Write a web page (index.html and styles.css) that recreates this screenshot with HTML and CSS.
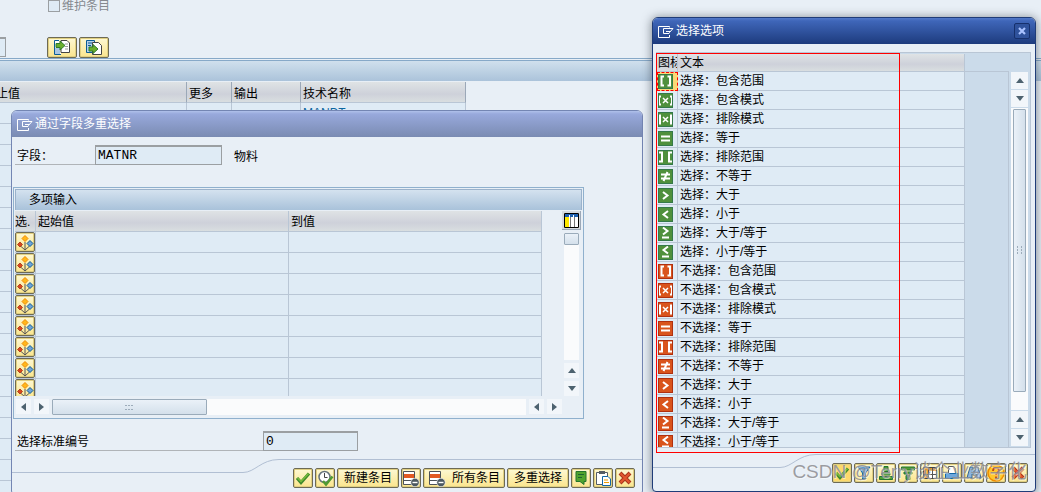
FILE: index.html
```html
<!DOCTYPE html>
<html lang="zh-CN">
<head>
<meta charset="utf-8">
<title>选择选项</title>
<link rel="stylesheet" href="styles.css">
</head>
<body>
<svg class="defs" aria-hidden="true">
  <symbol id="in" viewBox="0 0 15 15"><path d="M6 2.5H3.500v9H6M9.500 2.500H12v9H9.500"/></symbol>
  <symbol id="inx" viewBox="0 0 15 15"><path d="M3 3.500H1v8h2M12 3.500h2v8h-2"/><path class="thin" d="M5 5l5 5M10 5l-5 5"/></symbol>
  <symbol id="outx" viewBox="0 0 15 15"><path d="M0 3.500h2v8H0M15 3.500h-2v8h2"/><path class="thin" d="M5 5l5 5M10 5l-5 5"/></symbol>
  <symbol id="eq" viewBox="0 0 15 15"><path d="M3 5.500h9M3 9.500h9"/></symbol>
  <symbol id="out" viewBox="0 0 15 15"><path d="M1 2.500h3v9H1M14 2.500h-3v9h3"/></symbol>
  <symbol id="ne" viewBox="0 0 15 15"><path d="M3 5.500h9M3 9.500h9M9.500 3l-4 9"/></symbol>
  <symbol id="gt" viewBox="0 0 15 15"><path d="M5 4l4.500 3.500L5 11"/></symbol>
  <symbol id="lt" viewBox="0 0 15 15"><path d="M10 4L5.500 7.500 10 11"/></symbol>
  <symbol id="ge" viewBox="0 0 15 15"><path d="M5 1.500L9.500 5 5 8.500M4 11.500h7"/></symbol>
  <symbol id="le" viewBox="0 0 15 15"><path d="M10 1.500L5.500 5 10 8.500M4 11.500h7"/></symbol>
  <symbol id="pick" viewBox="0 0 18 17"><path d="M9 8v8L4.500 12M9 16l4.500-4" fill="none" stroke="#555" stroke-width="1"/><path d="M9 1.500L12 4.500 9 7.500 6 4.500z" fill="#ffb71b" stroke="#f08a00"/><path d="M4 8l2.500 2.500L4 13 1.500 10.500z" fill="#d8481c" stroke="#a82c10" stroke-width=".8"/><path d="M14 6.500l3 3-3 3-3-3z" fill="#6fa3d8" stroke="#0b5a94"/></symbol>
  <symbol id="check" viewBox="0 0 16 16"><path d="M2 8l4 4.500 8-9" fill="none" stroke="#3f8a2c" stroke-width="3.200"/><path d="M2.500 8L6 11.500l7.500-8" fill="none" stroke="#79bd3c" stroke-width="1.400"/></symbol>
  <symbol id="cross" viewBox="0 0 16 16"><path d="M3 3l10 10M13 3L3 13" stroke="#a9331c" stroke-width="4"/><path d="M3.500 3.500l9 9M12.500 3.500l-9 9" stroke="#e2582e" stroke-width="2"/></symbol>
  <symbol id="exit" viewBox="0 0 16 13"><path d="M11.500 2.500v-1h-11v11h11V10M5.500 3.500H15L11.500 7.500M5.500 3.500v5h5.500l.5-1M8 6.500h4" fill="none" stroke="#fff"/></symbol>
  <symbol id="delrow" viewBox="0 0 18 17"><path d="M1.500 1.500h11v13h-11zM1.500 10.500h11" fill="#fff" stroke="#4d5258"/><path d="M2 4h10v4H2z" fill="#e25a22"/><circle cx="13" cy="12.500" r="4.200" fill="#4d5960" stroke="#fff" stroke-width=".6"/><path d="M10.500 12.500h5" stroke="#fff" stroke-width="1.400"/></symbol>
</svg>

<main class="stage">
  <section class="page">
    <div class="page-tools">
      <label class="upkeep"><input type="checkbox" class="tick" disabled>维护条目</label>
      <div class="tool-row">
        <input class="field stub" type="text" aria-label="值">
        <button class="btn wide" type="button" aria-label="导入">
          <svg width="18" height="17" viewBox="0 0 18 17"><path d="M6 1.500H1.500v14H8" fill="#fff" stroke="#0c5c96"/><path d="M2 9h5v6H2z" fill="#a9c6e4"/><path d="M8 1.500h6l2.500 2.500v9.500H8z" fill="#fff" stroke="#444"/><path d="M12 5h3M12 7.500h3M12 10h3" stroke="#999"/><path d="M3 4.500h4V2l5 4.500L7 11V8.500H3z" fill="#6aae2c" stroke="#2e7b2c"/></svg>
        </button>
        <button class="btn wide" type="button" aria-label="导出">
          <svg width="18" height="17" viewBox="0 0 18 17"><path d="M1.500 1.500h8v12h-8z" fill="#b5d0ea" stroke="#0c5c96"/><path d="M7.500 3.500h6l3 3v9h-9z" fill="#fff" stroke="#444"/><path d="M3 4h4M3 6.500h3" stroke="#0c5c96"/><path d="M4 8h4V5.500l5 4.500-5 4.500V12H4z" fill="#6aae2c" stroke="#2e7b2c"/></svg>
        </button>
      </div>
    </div>
    <div class="page-bar"></div>
    <table class="grid back">
      <colgroup><col class="b1"><col class="b2"><col class="b3"><col class="b4"></colgroup>
      <thead><tr><th><span class="cut">止值</span></th><th>更多</th><th>输出</th><th>技术名称</th></tr></thead>
      <tbody>
        <tr><td></td><td></td><td></td><td class="tech">MANDT</td></tr>
        <tr><td></td><td></td><td></td><td></td></tr><tr><td></td><td></td><td></td><td></td></tr>
        <tr><td></td><td></td><td></td><td></td></tr><tr><td></td><td></td><td></td><td></td></tr>
        <tr><td></td><td></td><td></td><td></td></tr><tr><td></td><td></td><td></td><td></td></tr>
        <tr><td></td><td></td><td></td><td></td></tr><tr><td></td><td></td><td></td><td></td></tr>
        <tr><td></td><td></td><td></td><td></td></tr><tr><td></td><td></td><td></td><td></td></tr>
        <tr><td></td><td></td><td></td><td></td></tr><tr><td></td><td></td><td></td><td></td></tr>
        <tr><td></td><td></td><td></td><td></td></tr><tr><td></td><td></td><td></td><td></td></tr>
        <tr><td></td><td></td><td></td><td></td></tr><tr><td></td><td></td><td></td><td></td></tr>
        <tr><td></td><td></td><td></td><td></td></tr><tr><td></td><td></td><td></td><td></td></tr>
      </tbody>
    </table>
  </section>

  <section class="dialog multi" aria-label="通过字段多重选择">
    <header class="title muted"><svg width="16" height="13"><use href="#exit"/></svg><span>通过字段多重选择</span></header>
    <div class="form first">
      <label class="caption short" for="fld">字段：</label>
      <input class="field name" id="fld" type="text" value="MATNR">
      <span class="desc">物料</span>
    </div>
    <div class="frame">
      <h2 class="frame-title">多项输入</h2>
      <div class="frame-body">
        <div class="clip">
          <table class="grid entry">
            <colgroup><col class="e1"><col><col></colgroup>
            <thead><tr><th>选.</th><th>起始值</th><th>到值</th></tr></thead>
            <tbody>
              <tr><td><button class="btn pick" type="button" aria-label="选择"><svg width="18" height="17"><use href="#pick"/></svg></button></td><td></td><td></td></tr>
              <tr><td><button class="btn pick" type="button" aria-label="选择"><svg width="18" height="17"><use href="#pick"/></svg></button></td><td></td><td></td></tr>
              <tr><td><button class="btn pick" type="button" aria-label="选择"><svg width="18" height="17"><use href="#pick"/></svg></button></td><td></td><td></td></tr>
              <tr><td><button class="btn pick" type="button" aria-label="选择"><svg width="18" height="17"><use href="#pick"/></svg></button></td><td></td><td></td></tr>
              <tr><td><button class="btn pick" type="button" aria-label="选择"><svg width="18" height="17"><use href="#pick"/></svg></button></td><td></td><td></td></tr>
              <tr><td><button class="btn pick" type="button" aria-label="选择"><svg width="18" height="17"><use href="#pick"/></svg></button></td><td></td><td></td></tr>
              <tr><td><button class="btn pick" type="button" aria-label="选择"><svg width="18" height="17"><use href="#pick"/></svg></button></td><td></td><td></td></tr>
              <tr><td><button class="btn pick" type="button" aria-label="选择"><svg width="18" height="17"><use href="#pick"/></svg></button></td><td></td><td></td></tr>
            </tbody>
          </table>
        </div>
        <div class="side">
          <button class="config" type="button" aria-label="配置"><svg width="15" height="15" viewBox="0 0 15 15"><path d="M0 0h15v15H0z" fill="#fff"/><path d="M1 1h13v3H1z" fill="#1d5fb0"/><path d="M1 4h4v10H1z" fill="#ffe800"/><path d="M6.500 4v10M10.500 4v10" stroke="#777"/><path d="M5.500 2v2M9.500 2v2" stroke="#fff"/><path d="M.5.5h14v14H.5z" fill="none" stroke="#000"/></svg></button>
          <div class="vtrack"><span class="thumb small"></span></div>
          <button class="arrow" type="button" aria-label="上"><i class="tri up"></i></button>
          <button class="arrow" type="button" aria-label="下"><i class="tri down"></i></button>
        </div>
      </div>
      <div class="hbar">
        <button class="arrow" type="button" aria-label="左"><i class="tri left"></i></button>
        <button class="arrow" type="button" aria-label="右"><i class="tri right"></i></button>
        <div class="htrack"><span class="thumb long"><svg width="9" height="5" viewBox="0 0 9 5"><path d="M0 .5h9M0 4.500h9" stroke="#9dacba" stroke-dasharray="2 1" stroke-width="1"/></svg></span></div>
        <button class="arrow" type="button" aria-label="左"><i class="tri left"></i></button>
        <button class="arrow" type="button" aria-label="右"><i class="tri right"></i></button>
      </div>
    </div>
    <div class="form">
      <label class="caption long-caption" for="num">选择标准编号</label>
      <input class="field number" id="num" type="text" value="0">
    </div>
    <footer>
      <div class="ledge"><i class="low"></i><svg width="36" height="14" viewBox="0 0 36 14"><path d="M0 13.500C12 13.500 18 .5 36 .5" fill="none" stroke="#b1bfd3"/></svg><i class="high"></i></div>
      <div class="actions">
        <button class="btn sq" type="button" aria-label="确认"><svg width="16" height="16"><use href="#check"/></svg></button>
        <button class="btn sq" type="button" aria-label="执行"><svg width="17" height="17" viewBox="0 0 17 17"><circle cx="7.500" cy="7" r="5.500" fill="#fff" stroke="#66737c" stroke-width="1.500"/><path d="M7.500 3v4.500h3" fill="none" stroke="#444"/><path d="M6 11l3 3.500 6.500-8" fill="none" stroke="#4f9a32" stroke-width="2.500"/></svg></button>
        <button class="btn text" type="button">新建条目</button>
        <button class="btn sq" type="button" aria-label="删除条目"><svg width="18" height="17"><use href="#delrow"/></svg></button>
        <button class="btn all" type="button"><svg width="18" height="17"><use href="#delrow"/></svg>所有条目</button>
        <button class="btn text" type="button">多重选择</button>
        <button class="btn sq" type="button" aria-label="导入文本"><svg width="16" height="16" viewBox="0 0 16 16"><path d="M3 1.500h10v10h-2v3L7 11.500H3z" fill="#50a32f" stroke="#23752d"/><path d="M5 4.500h6M5 7.500h4" stroke="#1d6530"/></svg></button>
        <button class="btn sq" type="button" aria-label="粘贴"><svg width="17" height="17" viewBox="0 0 17 17"><path d="M1.500 2.500h11v12h-11z" fill="#fff" stroke="#555c64"/><path d="M4 1h6v3H4z" fill="#555c64"/><path d="M7.500 6.500H13l2.500 2.500v6.500h-8z" fill="#fff" stroke="#1267a8"/><path d="M9 10h4M9 12.500h5" stroke="#ef9c00"/></svg></button>
        <button class="btn sq" type="button" aria-label="取消"><svg width="16" height="16"><use href="#cross"/></svg></button>
      </div>
    </footer>
  </section>

  <section class="dialog options" aria-label="选择选项">
    <header class="title"><svg width="16" height="13"><use href="#exit"/></svg><span>选择选项</span>
      <button class="close" type="button" aria-label="关闭"><svg width="8" height="8" viewBox="0 0 8 8"><path d="M1 1l6 6M7 1L1 7" stroke="#a9c2ff" stroke-width="2.200"/></svg></button>
    </header>
    <div class="list">
      <div class="list-clip">
        <table class="grid opts">
          <colgroup><col class="o1"><col></colgroup>
          <thead><tr><th>图标</th><th>文本</th></tr></thead>
          <tbody class="inc">
            <tr class="current"><td><svg class="sign"><use href="#in"/></svg></td><td>选择：包含范围</td></tr>
            <tr><td><svg class="sign"><use href="#inx"/></svg></td><td>选择：包含模式</td></tr>
            <tr><td><svg class="sign"><use href="#outx"/></svg></td><td>选择：排除模式</td></tr>
            <tr><td><svg class="sign"><use href="#eq"/></svg></td><td>选择：等于</td></tr>
            <tr><td><svg class="sign"><use href="#out"/></svg></td><td>选择：排除范围</td></tr>
            <tr><td><svg class="sign"><use href="#ne"/></svg></td><td>选择：不等于</td></tr>
            <tr><td><svg class="sign"><use href="#gt"/></svg></td><td>选择：大于</td></tr>
            <tr><td><svg class="sign"><use href="#lt"/></svg></td><td>选择：小于</td></tr>
            <tr><td><svg class="sign"><use href="#ge"/></svg></td><td>选择：大于/等于</td></tr>
            <tr><td><svg class="sign"><use href="#le"/></svg></td><td>选择：小于/等于</td></tr>
          </tbody>
          <tbody class="exc">
            <tr><td><svg class="sign"><use href="#in"/></svg></td><td>不选择：包含范围</td></tr>
            <tr><td><svg class="sign"><use href="#inx"/></svg></td><td>不选择：包含模式</td></tr>
            <tr><td><svg class="sign"><use href="#outx"/></svg></td><td>不选择：排除模式</td></tr>
            <tr><td><svg class="sign"><use href="#eq"/></svg></td><td>不选择：等于</td></tr>
            <tr><td><svg class="sign"><use href="#out"/></svg></td><td>不选择：排除范围</td></tr>
            <tr><td><svg class="sign"><use href="#ne"/></svg></td><td>不选择：不等于</td></tr>
            <tr><td><svg class="sign"><use href="#gt"/></svg></td><td>不选择：大于</td></tr>
            <tr><td><svg class="sign"><use href="#lt"/></svg></td><td>不选择：小于</td></tr>
            <tr><td><svg class="sign"><use href="#ge"/></svg></td><td>不选择：大于/等于</td></tr>
            <tr><td><svg class="sign"><use href="#le"/></svg></td><td>不选择：小于/等于</td></tr>
          </tbody>
        </table>
      </div>
      <div class="gutter"></div>
      <div class="vbar">
        <button class="arrow" type="button" aria-label="上"><i class="tri up"></i></button>
        <button class="arrow" type="button" aria-label="下"><i class="tri down"></i></button>
        <div class="vtrack"><span class="thumb tall"><svg width="5" height="9" viewBox="0 0 5 9"><path d="M.5 0v9M4.500 0v9" stroke="#9dacba" stroke-dasharray="2 1"/></svg></span></div>
        <button class="arrow" type="button" aria-label="上"><i class="tri up"></i></button>
        <button class="arrow" type="button" aria-label="下"><i class="tri down"></i></button>
      </div>
    </div>
    <footer>
      <div class="ledge"><i class="low"></i><svg width="36" height="14" viewBox="0 0 36 14"><path d="M0 13.500C12 13.500 18 .5 36 .5" fill="none" stroke="#b1bfd3"/></svg><i class="high"></i></div>
      <div class="actions">
        <button class="btn sq focus" type="button" aria-label="确认"><svg width="16" height="16"><use href="#check"/></svg></button>
        <button class="btn sq" type="button" aria-label="过滤"><svg width="16" height="16" viewBox="0 0 16 16"><path d="M2 2h12L9.500 8v6h-3V8z" fill="#6aa2d6" stroke="#1267a8"/></svg></button>
        <button class="btn sq" type="button" aria-label="升序"><svg width="16" height="16" viewBox="0 0 16 16"><path d="M6 1.500h4v5H6zM4 8h8v2H4zM1.500 11.500h13v3h-13z" fill="#4f9f35" stroke="#23752d"/></svg></button>
        <button class="btn sq" type="button" aria-label="降序"><svg width="16" height="16" viewBox="0 0 16 16"><path d="M1.500 2h13v3h-13zM4 7h8v2H4zM6 10.500h4v4H6z" fill="#4f9f35" stroke="#23752d"/></svg></button>
        <button class="btn sq" type="button" aria-label="布局"><svg width="16" height="16" viewBox="0 0 16 16"><path d="M1.500 2.500h13v11h-13z" fill="#fff" stroke="#444"/><path d="M2 3h12v3H2zM2 6h4v7H2z" fill="#f09a2a"/><path d="M6.500 3v10M10.500 3v10M2 9.500h12" stroke="#555"/></svg></button>
        <button class="btn sq" type="button" aria-label="打印"><svg width="16" height="16" viewBox="0 0 16 16"><path d="M4.500 1.500h5l2 2v5h-7z" fill="#fff" stroke="#555"/><path d="M1.500 8.500h13v5h-13z" fill="#6ea7dc" stroke="#1267a8"/></svg></button>
        <button class="btn sq" type="button" aria-label="查找"><svg width="16" height="16" viewBox="0 0 16 16"><path d="M4 2h3v4h2V2h3l3 11h-5V9H6v4H1z" fill="#8eb4dc" stroke="#316696"/></svg></button>
        <button class="btn sq" type="button" aria-label="帮助"><svg width="18" height="18" viewBox="0 0 18 18"><circle cx="9" cy="9" r="8" fill="#ffc72e" stroke="#ef8d00" stroke-width="1.500"/><path d="M6 7c0-4 6-4 6-.5 0 2-3 2-3 4.500M9 12.500v2" fill="none" stroke="#c14a14" stroke-width="1.800"/></svg></button>
        <button class="btn sq" type="button" aria-label="取消"><svg width="16" height="16"><use href="#cross"/></svg></button>
      </div>
    </footer>
    <div class="marker"></div>
  </section>
  <p class="credit">CSDN @Terry谈企业数字化</p>
</main>
</body>
</html>
```
FILE: styles.css
```css
* { box-sizing: border-box; }
body { margin: 0; background: #e8eff6; color: #000; font: 12px/16px "Liberation Sans", "Noto Sans CJK SC", sans-serif; }
button, input { font: inherit; color: inherit; }
.defs { position: absolute; width: 0; height: 0; }
.stage { position: relative; height: 100vh; overflow: hidden; }

/* shared controls */
.btn { display: flex; align-items: center; justify-content: center; flex: none; height: 20px; padding: 0; border: 1px solid #6d6a55; border-radius: 2px; background: linear-gradient(#fdf8d4, #fbe58d); box-shadow: inset 0 0 0 1px #e0cf80; }
.btn svg { flex: none; }
.sq { width: 20px; }
.wide { width: 30px; height: 21px; }
.text { width: 62px; white-space: nowrap; }
.all { width: 82px; gap: 6px; white-space: nowrap; }
.focus { background: #fdd96c; }
.field { height: 20px; padding: 0 2px; border: 1px solid #9b9fa2; border-top-width: 2px; border-radius: 0; background: #dfebf5; font-family: "Liberation Mono", monospace; font-size: 13px; outline: 0; }
.grid { table-layout: fixed; border-collapse: separate; border-spacing: 0; width: 100%; }
.grid th, .grid td { padding: 0 0 0 2px; overflow: hidden; white-space: nowrap; text-align: left; font-weight: normal; border-right: 1px solid #b9c6d5; border-bottom: 1px solid #b9c6d5; }
.grid th { background: linear-gradient(#dfe3e5, #ced1da 60%, #d9dee0); }
.grid td { background: #dfebf5; }
.arrow { display: flex; align-items: center; justify-content: center; flex: none; width: 15px; height: 15px; padding: 0; border: 0; background: #f2f6fa; }
.tri { width: 0; height: 0; border: 4px solid transparent; }
.up { border-bottom: 5px solid #4d626f; border-top: 0; }
.down { border-top: 5px solid #4d626f; border-bottom: 0; }
.left { border-right: 5px solid #4d626f; border-left: 0; }
.right { border-left: 5px solid #4d626f; border-right: 0; }
.thumb { display: flex; align-items: center; justify-content: center; border: 1px solid #9aabba; border-radius: 1px; background: linear-gradient(#eaf1f8, #d4e0eb); }
.vtrack { flex: 1; background: #fafbfc; }

/* page behind the windows */
.page-tools { height: 58px; padding-left: 48px; display: flex; flex-direction: column; justify-content: space-between; }
.upkeep { display: flex; align-items: center; gap: 2px; height: 12px; color: #85898f; }
.tick { appearance: none; width: 12px; height: 12px; margin: 0; border: 1px solid #9b9fa2; background: #dfebf5; }
.tool-row { display: flex; gap: 2px; margin-left: -48px; }
.stub { width: 6px; margin-right: 39px; padding: 0; border-left: 0; }
.page-bar { height: 24px; border-top: 1px solid #87a9c8; border-bottom: 1px solid #e8eff6; background: linear-gradient(#e8eff6 1px, #87a9c8 1px, #87a9c8 2px, #d0e0ed 2px, #abc3da); }
.back { width: 466px; }
.back .b1 { width: 187px; }
.back .b2 { width: 45px; }
.back .b3 { width: 69px; }
.back th, .back td { height: 21px; }
.grid.back th { padding-top: 3px; border-right-color: #9ba8b8; }
.cut { margin-left: -6px; }
.back .tech { color: #0c66a0; font-size: 12px; }

/* windows */
.dialog { position: absolute; display: flex; flex-direction: column; background: #e8eff6; border: 1px solid #7486b3; border-radius: 6px 6px 4px 4px; }
.multi { left: 11px; right: 398px; top: 110px; bottom: -3px; }
.options { right: 5px; top: 17px; bottom: 0; width: 384px; border-color: #1f3c78; box-shadow: 0 1px 10px 1px rgba(40, 50, 60, .5); }
.title { display: flex; align-items: center; gap: 2px; flex: none; height: 26px; padding: 0 5px; border-radius: 5px 5px 0 0; color: #fff; background: linear-gradient(#5279c9, #3f66b9 3px, #1d3b7d); }
.muted { background: linear-gradient(#b0c1ea, #98a9dc 3px, #7a8bb2); }
.close { display: flex; align-items: center; justify-content: center; width: 16px; height: 16px; margin-left: auto; padding: 0; border: 1px solid #16306c; border-radius: 2px; background: #2f529c; }
.form { display: flex; align-items: center; flex: none; height: 20px; margin: 12px 0 0 3px; }
.first { margin-top: 8px; }
.caption { display: flex; align-items: center; height: 20px; padding: 2px 0 0 2px; border-bottom: 1px solid #b0b4b8; }
.short { width: 80px; }
.long-caption { width: 248px; }
.name { width: 127px; }
.number { width: 95px; }
.desc { margin-left: 12px; padding-top: 3px; }
.frame { flex: none; margin: 22px 58px 0 1px; padding: 1px; border: 1px solid #8fb0cd; }
.frame-title { height: 21px; margin: 0; padding: 0 0 0 13px; border: 1px solid #9bb2cb; border-bottom: 0; font-size: 12px; font-weight: normal; line-height: 20px; background: linear-gradient(#d4e2ef, #a9c2da); }
.frame-body { display: flex; justify-content: space-between; height: 186px; padding-top: 1px; }
.clip { flex: 1; margin-right: 20px; overflow: hidden; }
.entry .e1 { width: 21px; }
.entry th, .entry td { height: 21px; }
.grid.entry th { padding-top: 2px; }
.entry td:first-child, .entry th:first-child { padding-left: 0; }
.pick { width: 20px; }
.side { display: flex; flex-direction: column; align-items: center; gap: 3px; width: 19px; margin-right: 1px; }
.side .vtrack { width: 15px; }
.config { display: flex; align-items: center; justify-content: center; width: 19px; height: 19px; padding: 0; border: 0; border-bottom: 1px solid #9ba8b8; border-right: 1px solid #9ba8b8; background: #d6dade; }
.small { width: 15px; height: 12px; }
.hbar { display: flex; gap: 3px; padding: 3px 20px 2px 1px; }
.htrack { flex: 1; height: 16px; background: #fafbfc; }
.long { width: 155px; height: 16px; }
footer { flex: none; margin-top: 8px; }
.ledge { display: flex; height: 14px; }
.ledge i { border: 0 solid #b1bfd3; }
.low { width: 231px; border-bottom-width: 1px !important; }
.high { flex: 1; border-top-width: 1px !important; }
.actions { display: flex; justify-content: flex-end; gap: 2px; margin-top: -5px; padding-right: 7px; }

/* option list */
.list { display: flex; flex: 1; min-height: 0; margin: 8px 4px 0 3px; padding-top: 1px; border: 1px solid #b9c6d5; background: #cbdbea; }
.list-clip { flex: 1; overflow: hidden; }
.opts .o1 { width: 21px; }
.opts th, .opts td { height: 19px; }
.opts thead th { height: 18px; padding-top: 1px; }
.opts td:first-child, .opts th:first-child { padding-left: 1px; }
.sign { display: block; width: 15px; height: 15px; fill: none; stroke: #fff; stroke-width: 2; }
.thin { stroke-width: 1.500; }
.inc .sign { background: #4f903c; outline: 1px solid #34794a; outline-offset: -1px; }
.exc .sign { background: #d9541c; outline: 1px solid #b0300f; outline-offset: -1px; }
.grid .current td:first-child { background: #fbd977; border: 1px dashed #f00; padding-left: 0; }
.gutter { width: 44px; margin-top: 17px; border: 1px solid #b9c6d5; border-left: 0; border-bottom: 0; }
.vbar { display: flex; flex-direction: column; align-items: center; gap: 1px; width: 17px; margin: 18px 2px 1px 2px; }
.vbar .arrow { width: 17px; height: 17px; }
.vbar .vtrack { width: 17px; padding: 1px 2px 18px; }
.tall { height: 100%; background: linear-gradient(90deg, #eaf1f8, #d4e0eb); }
.options footer { margin-top: 6px; }
.options .low { width: 127px; }
.options .actions { padding: 0 7px 8px 0; }
.marker { position: absolute; left: 3px; top: 35px; right: 135px; bottom: 38px; border: 1px solid #f00; pointer-events: none; }
.credit { position: absolute; right: 14px; bottom: 8px; margin: 0; font-size: 19px; line-height: 24px; white-space: nowrap; color: rgba(140, 140, 145, .85); text-shadow: 1px 1px 0 rgba(255, 255, 255, .5); }
```
